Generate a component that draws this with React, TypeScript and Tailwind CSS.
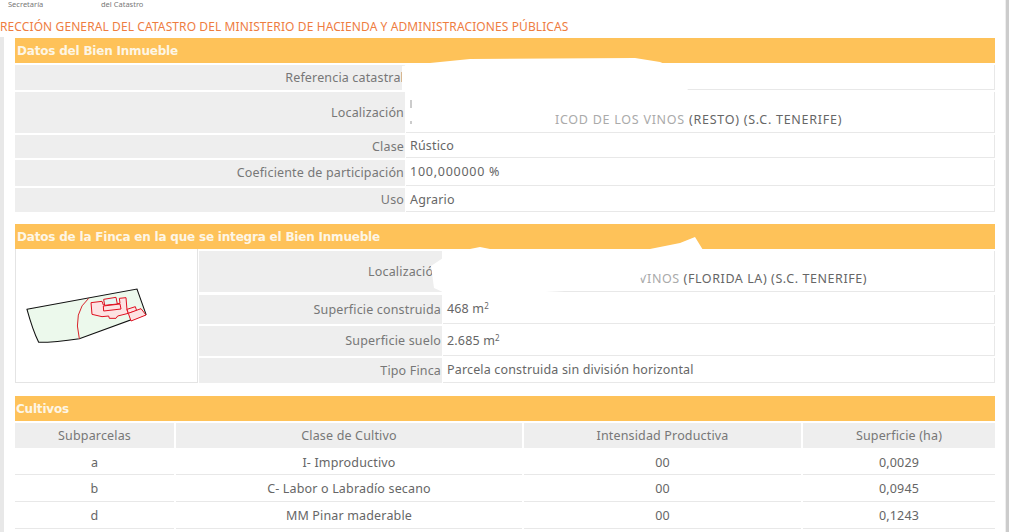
const label = "flex items-center justify-end bg-[#eeeeee] pt-px pr-[1px] text-[#777777]";
const value = "flex items-center border-r border-b border-[#e8e8e8] pt-px pl-[4px] text-[#666666]";
const heading =
  "flex h-[25px] items-center bg-[#fec259] pl-[2px] font-['DejaVu_Sans'] text-[12px] font-bold tracking-[-0.2px] text-[#fdf6e6]";

const cultivos = [
  { sub: "a", clase: "I- Improductivo", intensidad: "00", superficie: "0,0029", row: "h-[27px] leading-[29px]" },
  { sub: "b", clase: "C- Labor o Labradío secano", intensidad: "00", superficie: "0,0945", row: "h-[27px] leading-[27px]" },
  { sub: "d", clase: "MM Pinar maderable", intensidad: "00", superficie: "0,1243", row: "h-[27px] leading-[28px]" },
];

function ParcelMap() {
  return (
    <svg viewBox="0 0 420 210" className="mt-[31px] block h-[70px] w-[140px]">
      <path d="M33 88 L363 27 L390 103 L190 176 Q120 187 68 187 Q50 150 33 88 Z" fill="#ecf9ec" stroke="#111111" strokeWidth="3.2" />
      <path d="M218 55 Q170 95 190 176" fill="none" stroke="#d8232a" strokeWidth="3" />
      <path d="M225 68 L258 64 L262 75 L312 70 L310 55 L330 53 L333 90 L337 100 L305 108 L300 115 L280 115 L278 108 L258 110 L228 103 Z" fill="#fde3e3" stroke="#e01020" strokeWidth="3" />
      <path d="M263 58 L300 52 L304 72 L266 76 Z" fill="#e6f6f2" stroke="#e01020" strokeWidth="3" />
      <path d="M262 78 L312 72 L315 87 L263 93 Z" fill="#fde3e3" stroke="#e01020" strokeWidth="3" />
      <path d="M333 88 L358 80 L362 92 L337 100 Z" fill="#fde3e3" stroke="#e01020" strokeWidth="3" />
      <path d="M337 100 L375 86 L390 105 L345 123 Z" fill="#fde3e3" stroke="#e01020" strokeWidth="3" />
    </svg>
  );
}

// white smudges painted over the private data
function Smudge() {
  return (
    <svg viewBox="0 0 1009 532" className="pointer-events-none absolute top-0 left-0 h-[532px] w-[1009px]">
      <path d="M402 66 L430 63 L470 59 L635 58 L660 62 L672 67 L688 90 L690 104 L650 110 L540 112 L545 128 L490 132 L406 132 L406 92 L402 90 Z" fill="#ffffff" />
      <path d="M443 251 L470 249 L480 247 L500 251 L640 251 L680 243 L695 237 L703 250 L690 262 L650 272 L625 288 L545 292 L445 293 L434 288 L431 266 L443 258 Z" fill="#ffffff" />
      <path d="M411 100 V108 M411 121 V124" stroke="#999999" strokeWidth="1" />
    </svg>
  );
}

export default function App() {
  return (
    <div className="relative flex h-[532px] w-[1009px] overflow-hidden bg-white font-['Noto_Sans',sans-serif] text-[12.5px] tracking-[0.16px]">
      <div className="flex-1">
        {/* TOP OF THE PAGE */}
        <div className="h-[37px]">
          <div className="flex h-[9px] items-start pl-[8px] text-[7.5px] leading-[9px] tracking-normal text-[#777777]">
            <span className="w-[93px]">Secretaría</span>
            <span>del Catastro</span>
          </div>
          <p className="mt-[11px] whitespace-nowrap text-[12px] leading-[13px] tracking-[0.1px] text-[#ee7d3f]">
            RECCIÓN GENERAL DEL CATASTRO DEL MINISTERIO DE HACIENDA Y ADMINISTRACIONES PÚBLICAS
          </p>
        </div>

        <div className="flex h-[495px]">
          <div className="w-[4px] bg-[#e8e8e8]" />
          <div className="ml-[11px] mr-[10px] flex-1 pt-px">
            {/* BIEN INMUEBLE */}
            <div className={heading}>Datos del Bien Inmueble</div>
            <div className="mt-[2px] grid grid-cols-[390px_1fr] gap-x-px">
              <div className={`h-[25px] ${label}`}>Referencia catastral</div>
              <div className={`h-[25px] ${value}`} />
              <div className={`mt-[2px] h-[41px] ${label}`}>Localización</div>
              <div className={`mt-[2px] h-[41px] items-end pb-[2px] ${value}`}>
                <span className="ml-[145px] tracking-[0.74px]">
                  <span className="text-[#aaaaaa]">ICOD DE LOS VINOS</span> (RESTO) (S.C. TENERIFE)
                </span>
              </div>
              <div className={`mt-[2px] h-[23px] ${label}`}>Clase</div>
              <div className={`mt-[2px] h-[23px] ${value}`}>Rústico</div>
              <div className={`mt-[2px] h-[26px] !pt-0 ${label}`}>Coeficiente de participación</div>
              <div className={`mt-[2px] h-[26px] !pt-0 tracking-[0.74px] ${value}`}>100,000000 %</div>
              <div className={`mt-[2px] h-[24px] ${label}`}>Uso</div>
              <div className={`mt-[2px] h-[24px] ${value}`}>Agrario</div>
            </div>

            {/* FINCA */}
            <div className={`mt-[12px] ${heading}`}>Datos de la Finca en la que se integra el Bien Inmueble</div>
            <div className="flex">
              <div className="h-[134px] w-[183px] border-r border-b border-l border-[#e4e4e4]">
                <ParcelMap />
              </div>
              <div className="ml-px grid flex-1 grid-cols-[243px_1fr] gap-x-px pt-[2px]">
                <div className={`h-[41px] ${label}`}>Localización</div>
                <div className={`h-[41px] items-end pb-[2px] ${value}`}>
                  <span className="ml-[192px] tracking-[0.58px]">
                    <span className="text-[#aaaaaa]">VINOS</span> (FLORIDA LA) (S.C. TENERIFE)
                  </span>
                </div>
                <div className={`mt-[3px] h-[29px] ${label}`}>Superficie construida</div>
                <div className={`mt-[3px] h-[29px] ${value}`}>
                  <span>
                    468 m<sup className="text-[8px]">2</sup>
                  </span>
                </div>
                <div className={`mt-[2px] h-[30px] ${label}`}>Superficie suelo</div>
                <div className={`mt-[2px] h-[30px] ${value}`}>
                  <span>
                    2.685 m<sup className="text-[8px]">2</sup>
                  </span>
                </div>
                <div className={`mt-[2px] h-[25px] ${label}`}>Tipo Finca</div>
                <div className={`mt-[2px] h-[25px] ${value}`}>Parcela construida sin división horizontal</div>
              </div>
            </div>

            {/* CULTIVOS */}
            <div className={`mt-[13px] !pl-[1px] ${heading}`}>Cultivos</div>
            <div className="mt-[2px] grid grid-cols-[159px_346px_277px_1fr] gap-x-[2px] text-center text-[#666666]">
              <div className="h-[25px] bg-[#eeeeee] leading-[25px] text-[#777777]">Subparcelas</div>
              <div className="h-[25px] bg-[#eeeeee] leading-[25px] text-[#777777]">Clase de Cultivo</div>
              <div className="h-[25px] bg-[#eeeeee] leading-[25px] text-[#777777]">Intensidad Productiva</div>
              <div className="h-[25px] bg-[#eeeeee] leading-[25px] text-[#777777]">Superficie (ha)</div>
              {cultivos.map((c) => (
                <div key={c.sub} className="contents">
                  <div className={`border-b border-[#e8e8e8] ${c.row}`}>{c.sub}</div>
                  <div className={`border-b border-[#e8e8e8] ${c.row}`}>{c.clase}</div>
                  <div className={`border-b border-[#e8e8e8] ${c.row}`}>{c.intensidad}</div>
                  <div className={`border-b border-[#e8e8e8] ${c.row}`}>{c.superficie}</div>
                </div>
              ))}
            </div>
          </div>
        </div>
      </div>
      {/* browser scrollbar edge */}
      <div className="w-[4px] border-l border-[#eeeeee] bg-[#cccccc]" />
      <Smudge />
    </div>
  );
}
